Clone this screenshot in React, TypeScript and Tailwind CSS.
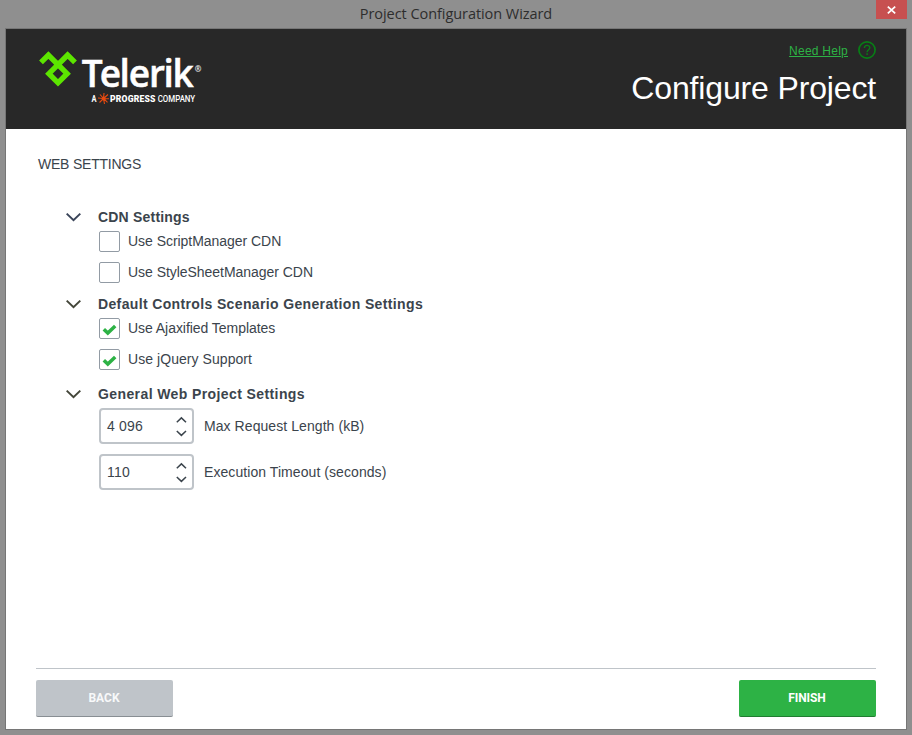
import type { ReactNode } from "react";

function TelerikLogo() {
  return (
    <svg width="176" height="58" viewBox="38 48 176 58" className="block">
      <path
        d="M41 62.3 48.4 55 58 64.6 67.6 55 75 62.3M58 64.6 48.9 73.7 58 82.8 67.1 73.7Z"
        fill="none"
        stroke="#5ce500"
        strokeWidth="5.4"
        strokeLinejoin="miter"
      />
      <text x="81.7 99.7 119.6 128.7 149 163.6 172.5" y="86.8" fontSize="37" fontWeight="600" fontFamily="Open Sans, sans-serif" fill="#fff" stroke="#fff" strokeWidth="0.5">Telerik</text>
      <text x="194.8" y="71.6" fontSize="8" fontWeight="700" fontFamily="Open Sans, sans-serif" fill="#eee">®</text>
      <g fontFamily="Roboto, sans-serif" fontSize="9" fill="#fff">
        <text x="91.5" y="101.8" fontWeight="700" textLength="5" lengthAdjust="spacingAndGlyphs">A</text>
        <text x="110" y="101.8" fontWeight="900" textLength="45.5" lengthAdjust="spacing" fontSize="8.6">PROGRESS</text>
        <text x="157.7" y="101.8" fontWeight="500" textLength="37.5" lengthAdjust="spacingAndGlyphs">COMPANY</text>
      </g>
      <path
        d="M103.5 98.5 104 93M103.5 98.5 108 94.5M103.5 98.5 109 98.7M103.5 98.5 107.5 102.3M103.5 98.5 104.5 104M103.5 98.5 99.5 102.5M103.5 98.5 98 98M103.5 98.5 100 94.5"
        stroke="#e84a10"
        strokeWidth="1.1"
        fill="none"
      />
      <circle cx="103.7" cy="98.5" r="1.9" fill="#e84a10" />
    </svg>
  );
}

function HelpIcon() {
  return (
    <svg width="18" height="18" viewBox="0 0 18 18" fill="none" stroke="#087e16" className="block">
      <circle cx="9" cy="9" r="8.1" strokeWidth="1.7" />
      <path d="M6.4 7.1C6.4 3.5 11.8 3.6 11.8 6.7 11.8 8.7 9.1 8.8 9.1 11.2M9.1 12.3V13.9" strokeWidth="1.4" />
    </svg>
  );
}

function GroupHeader({ title, spacing, stroke }: { title: string; spacing: string; stroke: string }) {
  return (
    <div className="flex h-5 items-center">
      <svg width="16" height="10" viewBox="0 0 16 10" className={`mr-[17px] block ${stroke}`}>
        <path d="M1.7 1.6 8.5 8.2 15.3 1.6" fill="none" strokeWidth="2" />
      </svg>
      <h2 className={`text-sm leading-5 font-bold whitespace-nowrap ${spacing}`}>{title}</h2>
    </div>
  );
}

function CheckRow({ label, checked, spacing }: { label: string; checked?: boolean; spacing: string }) {
  return (
    <div className="flex h-[21px] items-center gap-2">
      <span className="flex size-[21px] items-center justify-center rounded-[2px] border border-[#929ba4] bg-white">
        {checked && (
          <svg width="15" height="12" viewBox="0 0 15 12" className="mt-[3px] block">
            <path d="M1.8 5.3 5.8 9.1 13.2 2" fill="none" stroke="#2db245" strokeWidth="3.5" />
          </svg>
        )}
      </span>
      <span className={`pb-0.5 leading-5 whitespace-nowrap ${spacing}`}>{label}</span>
    </div>
  );
}

function NumberRow({ value, label }: { value: string; label: string }) {
  return (
    <div className="flex h-9 items-center gap-2.5">
      <div className="flex h-9 w-[95px] items-center justify-between rounded-[4px] border-2 border-[#bfc4c9] bg-white pr-1 pl-1.5">
        <span className="tracking-[0.2px]">{value}</span>
        <svg width="12" height="24" viewBox="0 0 12 24" fill="none" stroke="#3b444c" strokeWidth="1.5" className="block">
          <path d="M.8 8.3 5.4 3.9 10 8.3M.8 17 5.4 21.4 10 17" />
        </svg>
      </div>
      <span className="tracking-[0.07px] whitespace-nowrap">{label}</span>
    </div>
  );
}

function WizardButton({ className, children }: { className: string; children: ReactNode }) {
  return (
    <button
      className={`h-[37px] w-[137px] rounded-[2px] border-b pr-px pb-px font-['Roboto',sans-serif] text-xs font-bold ${className}`}
    >
      {children}
    </button>
  );
}

export default function App() {
  return (
    <div className="flex h-[735px] w-[912px] flex-col bg-[#8f8f8f] px-[5px] pb-[5px] font-['Liberation_Sans',Arial,sans-serif] text-sm text-[#3b444c]">
      <div className="relative flex h-7 shrink-0 justify-center">
        <div className="pt-[3px] font-['Open_Sans',sans-serif] text-[14.5px] leading-[21px] tracking-[-0.06px] text-[#2d2d2d]">
          Project Configuration Wizard
        </div>
        <button className="absolute top-0 right-0 flex h-[19px] w-[31px] items-center justify-center bg-[#c75050]">
          <svg width="9" height="8" viewBox="0 0 9 8" className="block">
            <path d="M.8.6 8.2 7.4M8.2.6.8 7.4" stroke="#fff" strokeWidth="1.7" />
          </svg>
        </button>
      </div>
      <div className="flex flex-1 flex-col border border-[#767676] bg-white">
        <header className="flex h-[100px] shrink-0 justify-between bg-[#282828] pr-[30px] pl-8">
          <div className="pt-[19px]">
            <TelerikLogo />
          </div>
          <div className="flex flex-col items-end">
            <div className="mt-3 flex h-[18px] items-center gap-2.5">
              <a className="pt-0.5 text-[12px] leading-[18px] tracking-[0.25px] text-[#2db245] underline">Need Help</a>
              <HelpIcon />
            </div>
            <h1 className="mt-2.5 text-[32px] leading-[38px] tracking-[-0.15px] whitespace-nowrap text-white">Configure Project</h1>
          </div>
        </header>
        <main className="flex-1 px-8 pt-[25px]">
          <div className="leading-5 tracking-[-0.22px]">WEB SETTINGS</div>
          <div className="pt-[33px] pl-[27px]">
            <GroupHeader title="CDN Settings" spacing="tracking-[0.2px]" stroke="stroke-[#3a4459]" />
            <div className="mt-1 flex flex-col gap-2.5 pl-[34px]">
              <CheckRow label="Use ScriptManager CDN" spacing="tracking-[-0.04px]" />
              <CheckRow label="Use StyleSheetManager CDN" spacing="tracking-[-0.04px]" />
            </div>
            <div className="mt-[11px]">
              <GroupHeader title="Default Controls Scenario Generation Settings" spacing="tracking-[0.36px]" stroke="stroke-[#434639]" />
            </div>
            <div className="mt-1 flex flex-col gap-2.5 pl-[34px]">
              <CheckRow label="Use Ajaxified Templates" spacing="tracking-[-0.05px]" checked />
              <CheckRow label="Use jQuery Support" spacing="tracking-[0.06px]" checked />
            </div>
            <div className="mt-3.5">
              <GroupHeader title="General Web Project Settings" spacing="tracking-[0.4px]" stroke="stroke-[#434639]" />
            </div>
            <div className="mt-1 flex flex-col gap-2.5 pl-[34px]">
              <NumberRow value="4 096" label="Max Request Length (kB)" />
              <NumberRow value="110" label="Execution Timeout (seconds)" />
            </div>
          </div>
        </main>
        <footer className="mx-[30px] flex h-[61px] shrink-0 justify-between border-t border-[#bfc4c9] pt-[11px]">
          <WizardButton className="border-[#888e93] bg-[#bfc4c9] text-[#f8f9fa]">BACK</WizardButton>
          <WizardButton className="border-[#207d31] bg-[#2db245] tracking-[-0.1px] text-white">FINISH</WizardButton>
        </footer>
      </div>
    </div>
  );
}
